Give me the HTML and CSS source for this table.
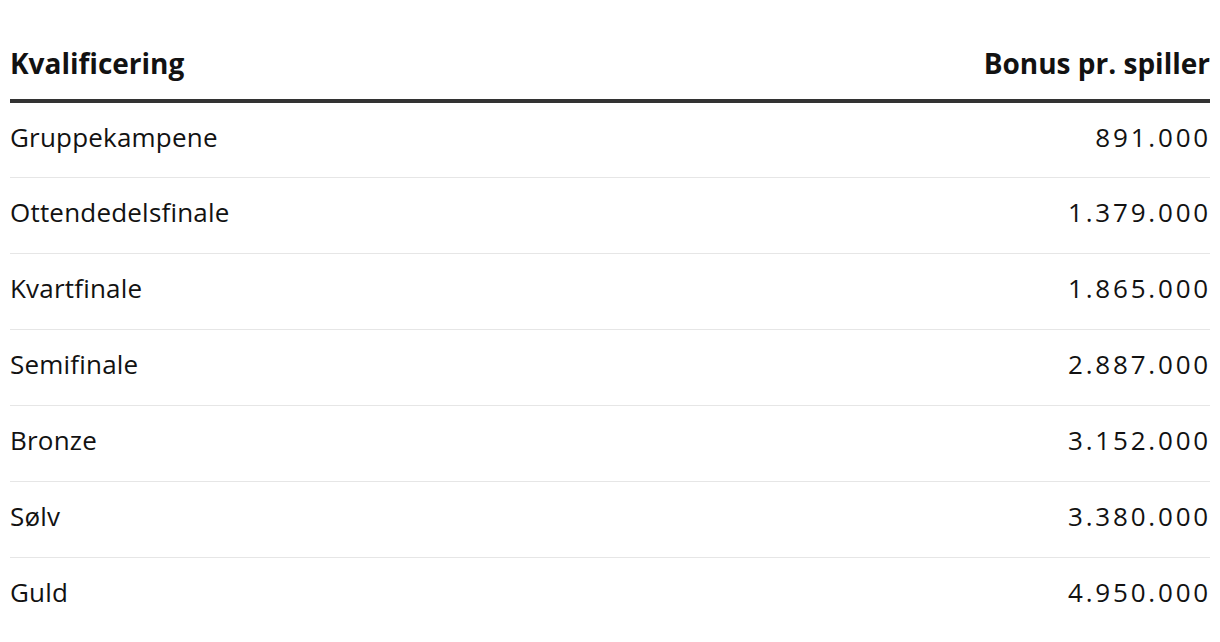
FILE: index.html
```html
<!DOCTYPE html>
<html lang="da">
<head>
<meta charset="utf-8">
<link rel="stylesheet" href="styles.css">
</head>
<body>
<table class="bonus">
  <thead>
    <tr><th class="left">Kvalificering</th><th class="right">Bonus pr. spiller</th></tr>
  </thead>
  <tbody>
    <tr><td>Gruppekampene</td><td class="num"><span>891.000</span></td></tr>
    <tr><td>Ottendedelsfinale</td><td class="num"><span>1.379.000</span></td></tr>
    <tr><td>Kvartfinale</td><td class="num"><span>1.865.000</span></td></tr>
    <tr><td>Semifinale</td><td class="num"><span>2.887.000</span></td></tr>
    <tr><td>Bronze</td><td class="num"><span>3.152.000</span></td></tr>
    <tr><td>Sølv</td><td class="num"><span>3.380.000</span></td></tr>
    <tr><td>Guld</td><td class="num"><span>4.950.000</span></td></tr>
  </tbody>
</table>
</body>
</html>
```
FILE: styles.css
```css
html, body {
  margin: 0;
  padding: 0;
  background: #fff;
}
body {
  padding: 0 10px;
  font-family: "Open Sans", "Noto Sans", sans-serif;
  color: #121212;
}
.bonus {
  width: 100%;
  border-collapse: collapse;
}
.bonus th {
  font-size: 28px;
  font-weight: 700;
  line-height: 36px;
  padding: 45px 0 18px;
  border-bottom: 4px solid #333;
}
.bonus th.left { text-align: left; }
.bonus th.right { text-align: right; }
.bonus td {
  font-size: 26px;
  line-height: 36px;
  height: 76px;
  padding: 0 0 6px;
  box-sizing: border-box;
  vertical-align: middle;
  border-bottom: 1px solid #e6e6e6;
  letter-spacing: 0.2px;
}
.bonus tr:last-child td { border-bottom: none; }
.bonus td.num { text-align: right; }
.bonus td.num span {
  letter-spacing: 2.8px;
  margin-right: -1px;
}
```
